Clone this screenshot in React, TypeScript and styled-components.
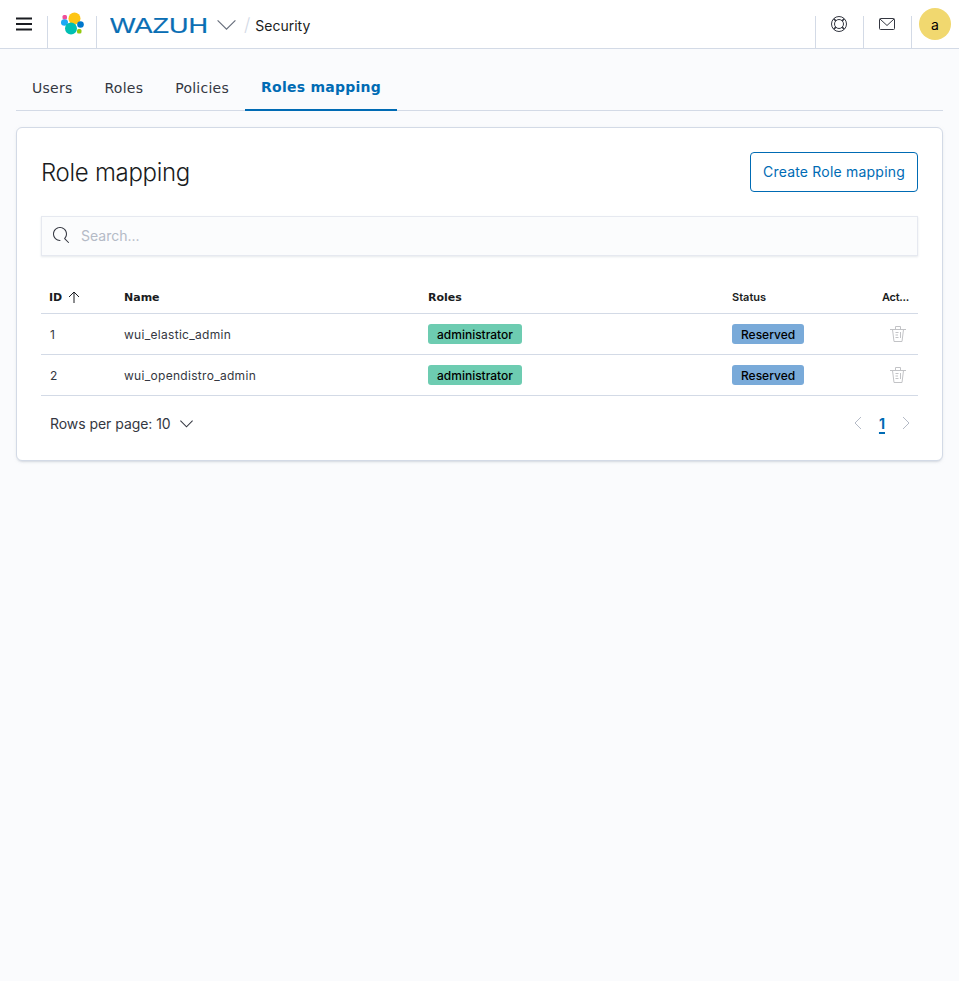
import React from 'react';
import styled, { createGlobalStyle } from 'styled-components';

const GlobalStyle = createGlobalStyle`
    html, body {
        margin: 0;
        padding: 0;
        min-height: 981px;
        background: #fafbfd;
        font-family: Inter, "Noto Sans", sans-serif;
        color: #343741;
    }
    * {
        box-sizing: border-box;
    }
`;

const Header = styled.header`
    display: flex;
    align-items: stretch;
    height: 49px;
    background: #fff;
    border-bottom: 1px solid #d3dae6;
`;

const HeaderCell = styled.div`
    position: relative;
    display: flex;
    align-items: center;
    justify-content: center;
    width: 48px;
    height: 48px;

    &::after {
        content: '';
        position: absolute;
        right: 0;
        bottom: 0;
        width: 1px;
        height: 32px;
        background: #d3dae6;
    }
`;

const LogoCell = styled(HeaderCell)`
    width: 49px;
`;

const Brand = styled.div`
    display: flex;
    align-items: center;
    flex: 1;
    padding: 1px 0 0 13px;
`;

const BrandChevron = styled.span`
    display: flex;
    margin-left: 9px;
`;

const Slash = styled.span`
    margin: 0 5px 0 8px;
    font-size: 18px;
    font-weight: 300;
    color: #d3dae6;
`;

const Crumb = styled.span`
    margin-top: 2px;
    font-size: 14px;
    color: #1a1c21;
`;

const RightCell = styled(HeaderCell)`
    &::before {
        content: '';
        position: absolute;
        left: 0;
        bottom: 0;
        width: 1px;
        height: 32px;
        background: #d3dae6;
    }
    &::after {
        display: none;
    }
`;

const Avatar = styled.div`
    display: flex;
    align-items: center;
    justify-content: center;
    width: 32px;
    height: 32px;
    border-radius: 50%;
    background: #f1d86f;
    color: #000;
    font-size: 14px;
`;

const Content = styled.main`
    padding: 16px 16px 0;
`;

const Tabs = styled.nav`
    display: flex;
    height: 46px;
    border-bottom: 1px solid #d3dae6;
`;

const Tab = styled.div<{ $active?: boolean }>`
    display: flex;
    align-items: center;
    height: 46px;
    padding: 0 16px 1px;
    font-family: "DejaVu Sans", sans-serif;
    font-size: 14px;
    letter-spacing: 0.25px;
    font-weight: ${(p) => (p.$active ? 700 : 400)};
    color: ${(p) => (p.$active ? '#006bb4' : '#343741')};
    border-bottom: ${(p) => (p.$active ? '2px solid #006bb4' : 'none')};
`;

const Panel = styled.section`
    margin-top: 16px;
    height: 334px;
    padding: 24px;
    background: #fff;
    border: 1px solid #d3dae6;
    border-radius: 6px;
    box-shadow: 0 2px 2px -1px rgba(152, 162, 179, 0.3), 0 1px 5px -2px rgba(152, 162, 179, 0.3);
`;

const PanelHead = styled.div`
    display: flex;
    align-items: center;
    justify-content: space-between;
`;

const Title = styled.h1`
    margin: 0;
    font-size: 24px;
    font-weight: 300;
    color: #1a1c21;
    letter-spacing: -0.3px;
`;

const PrimaryButton = styled.button`
    width: 168px;
    height: 40px;
    padding: 0 0 2px;
    background: #fff;
    border: 1px solid #006bb4;
    border-radius: 4px;
    font-family: inherit;
    font-size: 14px;
    letter-spacing: 0.2px;
    color: #006bb4;
`;

const SearchBox = styled.div`
    display: flex;
    align-items: center;
    gap: 12px;
    height: 40px;
    margin-top: 24px;
    padding: 0 0 2px 11px;
    background: #fbfcfd;
    border: 1px solid #e6e9f0;
    box-shadow: 0 1px 2px rgba(152, 162, 179, 0.25);
    font-size: 14px;
    color: #b4bac6;
`;

const Table = styled.div`
    margin-top: 25px;
`;

const HeadRow = styled.div`
    display: grid;
    grid-template-columns: 75px 304px 304px 1fr 44px;
    align-items: center;
    height: 33px;
    border-bottom: 1px solid #d3dae6;
`;

const Row = styled(HeadRow)`
    height: 41px;
`;

const HeadCell = styled.div<{ $sortable?: boolean }>`
    display: flex;
    align-items: center;
    gap: 6px;
    padding: 0 8px;
    white-space: nowrap;
    font-family: ${(p) => (p.$sortable ? '"DejaVu Sans", sans-serif' : 'inherit')};
    font-size: 11px;
    font-weight: ${(p) => (p.$sortable ? 700 : 600)};
    color: #1a1c21;
`;

const ActionsHead = styled(HeadCell)`
    letter-spacing: -0.3px;
`;

const Cell = styled.div<{ $end?: boolean }>`
    display: flex;
    align-items: center;
    justify-content: ${(p) => (p.$end ? 'flex-end' : 'flex-start')};
    padding: ${(p) => (p.$end ? '0 12px 0 0' : '0 8px')};
    font-size: 12px;
    letter-spacing: 0.3px;
    color: #343741;
`;

const IdCell = styled(Cell)`
    padding-left: 9px;
`;

const Badge = styled.span<{ $color: string }>`
    display: inline-block;
    padding: 0 9px;
    height: 20px;
    line-height: 21px;
    border-radius: 3px;
    background: ${(p) => p.$color};
    color: #000;
    font-size: 12px;
    font-weight: 500;
    letter-spacing: 0;
`;

const Pager = styled.div`
    display: flex;
    align-items: center;
    justify-content: space-between;
    height: 56px;
    padding: 0 4px 2px 9px;
`;

const RowsPerPage = styled.div`
    display: flex;
    align-items: center;
    gap: 9px;
    font-size: 14px;
    letter-spacing: -0.05px;
    color: #343741;
`;

const Pages = styled.div`
    display: flex;
    align-items: center;
    gap: 13px;
`;

const PageNumber = styled.span`
    font-size: 14px;
    font-weight: 700;
    color: #006bb4;
    text-decoration: underline;
    text-decoration-thickness: 2px;
    text-underline-offset: 3px;
`;

const Chevron = ({ size = 16, color = '#343741', weight = 1 }: { size?: number; color?: string; weight?: number }) => (
    <svg width={size} height={size} viewBox="0 0 16 16" fill="none">
        <path d="M0.5 4.5 8 12l7.5-7.5" stroke={color} strokeWidth={weight} />
    </svg>
);

const PageArrow = ({ right }: { right?: boolean }) => (
    <svg width="16" height="16" viewBox="0 0 16 16" fill="none">
        <path d={right ? 'M5 2l6 6-6 6' : 'M11 2 5 8l6 6'} stroke="#b4bac6" strokeWidth="1" />
    </svg>
);

const Hamburger = () => (
    <svg width="16" height="14" viewBox="0 0 16 14" fill="none">
        <path d="M0 1.5h16M0 7h16M0 12.5h16" stroke="#1a1c21" strokeWidth="2" />
    </svg>
);

const LogoMark = () => (
    <svg width="24" height="24" viewBox="0 0 24 24">
        <rect x="1.5" y="3" width="4.5" height="4.5" rx="1.5" fill="#f04e98" />
        <circle cx="13.5" cy="6.5" r="6" fill="#fec514" />
        <ellipse cx="3.5" cy="10.5" rx="3.5" ry="3.2" fill="#1ba9f5" />
        <circle cx="19.5" cy="12.5" r="3.3" fill="#0077cc" />
        <circle cx="10" cy="16.5" r="6" fill="#00bfb3" />
        <rect x="16" y="17" width="4.5" height="4.5" rx="1.5" fill="#93c90e" />
    </svg>
);

const WordMark = () => (
    <svg width="98" height="24" viewBox="0 0 98 24">
        <text
            x="0"
            y="20"
            textLength="98"
            lengthAdjust="spacingAndGlyphs"
            fontFamily="'Liberation Sans', sans-serif"
            fontSize="22"
            fill="#0a6eb4"
            stroke="#0a6eb4"
            strokeWidth="0.2"
        >
            WAZUH
        </text>
    </svg>
);

const LifeBuoy = () => (
    <svg width="16" height="16" viewBox="0 0 16 16" fill="none" stroke="#343741">
        <circle cx="8" cy="8" r="7.5" />
        <circle cx="8" cy="8" r="4.5" />
        <path d="M2.7 2.7l2.2 2.2M13.3 2.7l-2.2 2.2M2.7 13.3l2.2-2.2M13.3 13.3l-2.2-2.2" strokeWidth="1.6" />
    </svg>
);

const Mail = () => (
    <svg width="16" height="16" viewBox="0 0 16 16" fill="none" stroke="#343741">
        <rect x="0.5" y="2.5" width="15" height="11" rx="1" />
        <path d="M1 3l7 6.5L15 3" />
    </svg>
);

const SearchIcon = () => (
    <svg width="16" height="16" viewBox="0 0 16 16" fill="#343741">
        <path d="M11.271 11.978l3.872 3.873a.502.502 0 00.708 0 .502.502 0 000-.708l-3.565-3.564c2.38-2.747 2.267-6.923-.342-9.532-2.73-2.73-7.17-2.73-9.898 0-2.728 2.729-2.728 7.17 0 9.9a6.955 6.955 0 004.949 2.05.5.5 0 000-1 5.96 5.96 0 01-4.242-1.757 6.01 6.01 0 010-8.486c2.337-2.34 6.143-2.34 8.484 0a6.01 6.01 0 010 8.486.5.5 0 00.034.738z" />
    </svg>
);

const ArrowUp = () => (
    <svg width="12" height="12" viewBox="0 0 12 12" fill="none" stroke="#1a1c21">
        <path d="M6 12V1M1 6l5-5 5 5" />
    </svg>
);

const Trash = () => (
    <svg width="16" height="16" viewBox="0 0 16 16" fill="none" stroke="#c2c3c6">
        <path d="M0 3.5h16M5.5 3.5v-3h5v3M2.5 3.5l1.5 12h8l1.5-12" />
        <path d="M5.5 6.5h3M5.5 9h2.5M5.5 11.5h3M10.5 6v6" />
    </svg>
);

const mappings = [
    { id: 1, name: 'wui_elastic_admin' },
    { id: 2, name: 'wui_opendistro_admin' },
];

const App = () => (
    <>
        <GlobalStyle />
        <Header>
            <HeaderCell>
                <Hamburger />
            </HeaderCell>
            <LogoCell>
                <LogoMark />
            </LogoCell>
            <Brand>
                <WordMark />
                <BrandChevron>
                    <Chevron size={19} color="#69707d" />
                </BrandChevron>
                <Slash>/</Slash>
                <Crumb>Security</Crumb>
            </Brand>
            <RightCell>
                <LifeBuoy />
            </RightCell>
            <RightCell>
                <Mail />
            </RightCell>
            <RightCell>
                <Avatar>a</Avatar>
            </RightCell>
        </Header>
        <Content>
            <Tabs>
                <Tab>Users</Tab>
                <Tab>Roles</Tab>
                <Tab>Policies</Tab>
                <Tab $active>Roles mapping</Tab>
            </Tabs>
            <Panel>
                <PanelHead>
                    <Title>Role mapping</Title>
                    <PrimaryButton>Create Role mapping</PrimaryButton>
                </PanelHead>
                <SearchBox>
                    <SearchIcon />
                    Search...
                </SearchBox>
                <Table>
                    <HeadRow>
                        <HeadCell $sortable>
                            ID <ArrowUp />
                        </HeadCell>
                        <HeadCell $sortable>Name</HeadCell>
                        <HeadCell $sortable>Roles</HeadCell>
                        <HeadCell>Status</HeadCell>
                        <ActionsHead>Act...</ActionsHead>
                    </HeadRow>
                    {mappings.map((m) => (
                        <Row key={m.id}>
                            <IdCell>{m.id}</IdCell>
                            <Cell>{m.name}</Cell>
                            <Cell>
                                <Badge $color="#6dccb1">administrator</Badge>
                            </Cell>
                            <Cell>
                                <Badge $color="#79aad9">Reserved</Badge>
                            </Cell>
                            <Cell $end>
                                <Trash />
                            </Cell>
                        </Row>
                    ))}
                </Table>
                <Pager>
                    <RowsPerPage>
                        Rows per page: 10
                        <Chevron size={13} weight={1.3} />
                    </RowsPerPage>
                    <Pages>
                        <PageArrow />
                        <PageNumber>1</PageNumber>
                        <PageArrow right />
                    </Pages>
                </Pager>
            </Panel>
        </Content>
    </>
);

export default App;
